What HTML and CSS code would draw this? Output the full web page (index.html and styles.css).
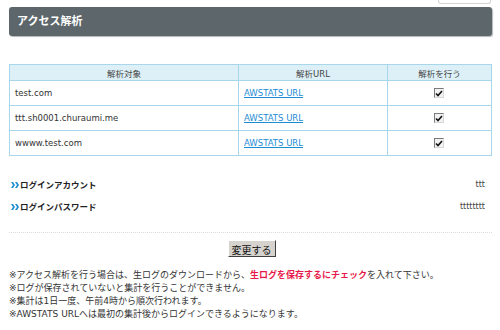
FILE: index.html
```html
<!DOCTYPE html>
<html lang="ja">

<head>
    <meta charset="UTF-8">
    <title>アクセス解析</title>
    <link rel="stylesheet" href="styles.css">
</head>

<body>
    <div class="topbar">
        <div class="tab"></div>
    </div>
    <h1 class="title">アクセス解析</h1>

    <table class="list">
        <tr>
            <th class="c1">解析対象</th>
            <th class="c2">解析URL</th>
            <th class="c3">解析を行う</th>
        </tr>
        <tr>
            <td>test.com</td>
            <td><a href="#">AWSTATS URL</a></td>
            <td class="chk"><span class="box"><svg width="8" height="7" viewBox="0 0 8 7"><path d="M1 3.5 L3 5.5 L7 1" fill="none" stroke="#111" stroke-width="1.6"/></svg></span></td>
        </tr>
        <tr>
            <td>ttt.sh0001.churaumi.me</td>
            <td><a href="#">AWSTATS URL</a></td>
            <td class="chk"><span class="box"><svg width="8" height="7" viewBox="0 0 8 7"><path d="M1 3.5 L3 5.5 L7 1" fill="none" stroke="#111" stroke-width="1.6"/></svg></span></td>
        </tr>
        <tr>
            <td>wwww.test.com</td>
            <td><a href="#">AWSTATS URL</a></td>
            <td class="chk"><span class="box"><svg width="8" height="7" viewBox="0 0 8 7"><path d="M1 3.5 L3 5.5 L7 1" fill="none" stroke="#111" stroke-width="1.6"/></svg></span></td>
        </tr>
    </table>

    <div class="login">
        <div class="row">
            <span class="label"><svg class="arr" width="8" height="6" viewBox="0 0 8 6"><path d="M0 0 L2 0 L4 3 L2 6 L0 6 L2 3 Z M4 0 L6 0 L8 3 L6 6 L4 6 L6 3 Z" fill="#1e8cd3"/></svg>ログインアカウント</span>
            <span class="val">ttt</span>
        </div>
        <div class="row">
            <span class="label"><svg class="arr" width="8" height="6" viewBox="0 0 8 6"><path d="M0 0 L2 0 L4 3 L2 6 L0 6 L2 3 Z M4 0 L6 0 L8 3 L6 6 L4 6 L6 3 Z" fill="#1e8cd3"/></svg>ログインパスワード</span>
            <span class="val">tttttttt</span>
        </div>
    </div>

    <div class="sep"></div>

    <div class="submit">
        <button class="btn">変更する</button>
    </div>

    <div class="notes">
        <p>※アクセス解析を行う場合は、生ログのダウンロードから、<b>生ログを保存するにチェック</b>を入れて下さい。</p>
        <p>※ログが保存されていないと集計を行うことができません。</p>
        <p>※集計は1日一度、午前4時から順次行われます。</p>
        <p>※AWSTATS URLへは最初の集計後からログインできるようになります。</p>
    </div>
</body>

</html>
```

FILE: styles.css
```css
body {
    margin: 0;
    padding: 0 8px 0 9px;
    font-family: "DejaVu Sans", "Noto Sans CJK JP", sans-serif;
    font-size: 9px;
    color: #333333;
    background: #ffffff;
}

.topbar {
    display: flex;
    justify-content: flex-end;
    height: 4px;
}

.tab {
    width: 53px;
    height: 4px;
    margin-right: 1px;
    border: 1px solid #d4d4d4;
    border-top: none;
    border-radius: 0 0 3px 3px;
    box-sizing: border-box;
}

.title {
    margin: 3px 0 0 0;
    height: 29px;
    line-height: 29px;
    padding-left: 8px;
    background: #5d676b;
    border-radius: 3px;
    box-shadow: 1px 1px 1px #b5b9bb;
    color: #ffffff;
    font-size: 11px;
    font-weight: bold;
}

.list {
    width: 100%;
    margin-top: 28px;
    border-collapse: collapse;
    border: 1px solid #a8d6ea;
}

.list th {
    height: 15px;
    padding: 0;
    background: #ddf0f7;
    border: 1px solid #a8d6ea;
    font-weight: normal;
    font-size: 8.5px;
    color: #444444;
}

.c1 {
    width: 228px;
}

.c2 {
    width: 148px;
}

.list td {
    height: 24px;
    padding: 0 0 0 5px;
    border: 1px solid #a8d6ea;
    font-size: 8.5px;
}

.list a {
    color: #1e8cd3;
}

.chk {
    text-align: center;
}

.box {
    display: inline-flex;
    justify-content: center;
    align-items: center;
    width: 10px;
    height: 10px;
    box-sizing: border-box;
    border: 1px solid #7a7a7a;
    border-right-color: #d8d8d8;
    border-bottom-color: #d8d8d8;
    background: #f2f2f2;
    vertical-align: middle;
    margin-left: -6px;
}

.login {
    margin-top: 17px;
}

.row {
    display: flex;
    justify-content: space-between;
    align-items: center;
    height: 22px;
    padding-right: 7px;
}

.label {
    font-weight: bold;
    font-size: 8.5px;
    color: #222222;
    padding-left: 2px;
}

.arr {
    margin-right: 1px;
}

.val {
    font-size: 8px;
    color: #444444;
}

.sep {
    margin-top: 15px;
    border-top: 1px dotted #d6dcdc;
}

.submit {
    display: flex;
    justify-content: center;
    margin-top: 7px;
}

.btn {
    font-family: "DejaVu Sans", "Noto Sans CJK JP", sans-serif;
    font-size: 10px;
    padding: 1px 3px;
    height: 17px;
    background: #d6d3ce;
    border: 1px solid;
    border-color: #ffffff #404040 #404040 #ffffff;
    color: #111111;
    margin-left: 2px;
}

.notes {
    margin-top: 12px;
}

.notes p {
    margin: 0;
    line-height: 13px;
    font-size: 9px;
    color: #333333;
}

.notes b {
    color: #e8194a;
}
```
